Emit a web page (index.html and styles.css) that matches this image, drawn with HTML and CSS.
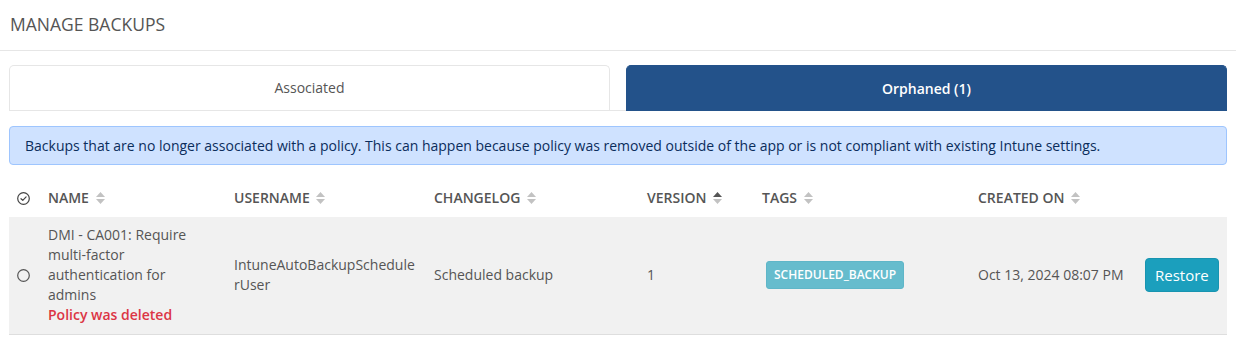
FILE: index.html
```html
<!DOCTYPE html>
<html lang="en">
<head>
  <meta charset="UTF-8">
  <title>Manage Backups</title>
  <link rel="stylesheet" href="styles.css">
</head>
<body>

  <!-- page title -->
  <div class="page-header">
    <h1 class="page-title">MANAGE BACKUPS</h1>
  </div>

  <div class="content">
    <!-- tabs -->
    <div class="tabs">
      <div class="tab">Associated</div>
      <div class="tab active">Orphaned (1)</div>
    </div>

    <div class="alert">
      Backups that are no longer associated with a policy. This can happen because policy was removed outside of the app or is not compliant with existing Intune settings.
    </div>

    <!-- backups table -->
    <div class="table">
      <div class="table-row table-head">
        <div class="cell cell-check">
          <svg class="icon" width="13" height="13" viewBox="0 0 13 13">
            <circle cx="6.5" cy="6.5" r="5.8" fill="none" stroke="#444" stroke-width="1.2"/>
            <path d="M4 6.7 L5.8 8.4 L9.1 4.9" fill="none" stroke="#444" stroke-width="1.2" stroke-linecap="round" stroke-linejoin="round"/>
          </svg>
        </div>
        <div class="cell">NAME <span class="sort"><svg width="9" height="12" viewBox="0 0 9 12"><path d="M4.5 0 L9 5 H0 Z" fill="#c2c2c2"/><path d="M0 7 H9 L4.5 12 Z" fill="#c2c2c2"/></svg></span></div>
        <div class="cell">USERNAME <span class="sort"><svg width="9" height="12" viewBox="0 0 9 12"><path d="M4.5 0 L9 5 H0 Z" fill="#c2c2c2"/><path d="M0 7 H9 L4.5 12 Z" fill="#c2c2c2"/></svg></span></div>
        <div class="cell">CHANGELOG <span class="sort"><svg width="9" height="12" viewBox="0 0 9 12"><path d="M4.5 0 L9 5 H0 Z" fill="#c2c2c2"/><path d="M0 7 H9 L4.5 12 Z" fill="#c2c2c2"/></svg></span></div>
        <div class="cell">VERSION <span class="sort"><svg width="9" height="12" viewBox="0 0 9 12"><path d="M4.5 0 L9 5 H0 Z" fill="#555"/><path d="M0 7 H9 L4.5 12 Z" fill="#c2c2c2"/></svg></span></div>
        <div class="cell">TAGS <span class="sort"><svg width="9" height="12" viewBox="0 0 9 12"><path d="M4.5 0 L9 5 H0 Z" fill="#c2c2c2"/><path d="M0 7 H9 L4.5 12 Z" fill="#c2c2c2"/></svg></span></div>
        <div class="cell">CREATED ON <span class="sort"><svg width="9" height="12" viewBox="0 0 9 12"><path d="M4.5 0 L9 5 H0 Z" fill="#c2c2c2"/><path d="M0 7 H9 L4.5 12 Z" fill="#c2c2c2"/></svg></span></div>
        <div class="cell"></div>
      </div>

      <div class="table-row table-body">
        <div class="cell cell-check">
          <svg class="icon" width="13" height="13" viewBox="0 0 13 13">
            <circle cx="6.5" cy="6.5" r="5.8" fill="none" stroke="#555" stroke-width="1.2"/>
          </svg>
        </div>
        <div class="cell">
          <div class="name-text">DMI - CA001: Require multi-factor authentication for admins</div>
          <div class="deleted">Policy was deleted</div>
        </div>
        <div class="cell username">IntuneAutoBackupSchedulerUser</div>
        <div class="cell">Scheduled backup</div>
        <div class="cell">1</div>
        <div class="cell"><span class="badge">SCHEDULED_BACKUP</span></div>
        <div class="cell">Oct 13, 2024 08:07 PM</div>
        <div class="cell"><button class="btn-restore">Restore</button></div>
      </div>
    </div>
  </div>

</body>
</html>
```

FILE: styles.css
```css
/* base */
body {
  margin: 0;
  background-color: #ffffff;
  font-family: "Open Sans", Arial, sans-serif;
  font-size: 14px;
  line-height: 20px;
  color: #555;
}

/* page title */
.page-header {
  padding: 12px 10px 13px;
  border-bottom: 1px solid #e6e6e6;
}

.page-title {
  margin: 0;
  font-size: 17.5px;
  font-weight: 400;
  line-height: 25px;
  color: #555;
}

.content {
  padding: 14px 9px 0;
}

/* tabs */
.tabs {
  display: flex;
  gap: 16px;
  border-bottom: 1px solid #e6e6e6;
}

.tab {
  flex: 1;
  height: 44px;
  display: flex;
  align-items: center;
  justify-content: center;
  border: 1px solid #e6e6e6;
  border-bottom: none;
  border-radius: 5px 5px 0 0;
  background-color: #fff;
  color: #555;
  margin-bottom: -1px;
}

.tab.active {
  background-color: #23528a;
  border-color: #23528a;
  color: #fff;
  font-weight: 600;
  height: 45px;
}

/* info alert */
.alert {
  margin-top: 15px;
  padding: 9px 15px 8px;
  border: 1px solid #9ec5fe;
  border-radius: 4px;
  background-color: #cfe2ff;
  color: #0b2d5c;
}

/* table */
.table {
  margin-top: 15px;
}

.table-row {
  display: grid;
  grid-template-columns: 31px 186px 200px 213px 115px 216px 167px 90px;
  align-items: center;
}

.cell {
  padding: 0 8px;
}

.table-head .cell {
  padding-top: 8px;
  padding-bottom: 9px;
  font-weight: 600;
  color: #555;
}

.table-body {
  background-color: #f1f1f1;
  border-bottom: 1px solid #dedede;
  padding: 8px 0 9px;
}

.cell-check {
  display: flex;
  align-items: center;
}

.icon {
  display: block;
}

.sort {
  display: inline-block;
  margin-left: 3px;
  vertical-align: -1px;
}

.sort svg {
  display: block;
}

.name-text {
  max-width: 160px;
}

.deleted {
  color: #dc3545;
  font-weight: 600;
}

.username {
  word-break: break-all;
}

.badge {
  display: inline-block;
  margin-left: 4px;
  padding: 4px 7px;
  font-size: 12px;
  font-weight: 600;
  line-height: 18px;
  color: #fff;
  background-color: #66bccd;
  border: 1px solid #5fb6c8;
  border-radius: 3px;
}

.btn-restore {
  padding: 6px 9px;
  font-family: "Open Sans", Arial, sans-serif;
  font-size: 15px;
  line-height: 20px;
  color: #fff;
  background-color: #1b9fbd;
  border: 1px solid #1894b0;
  border-radius: 4px;
  cursor: pointer;
}
```
